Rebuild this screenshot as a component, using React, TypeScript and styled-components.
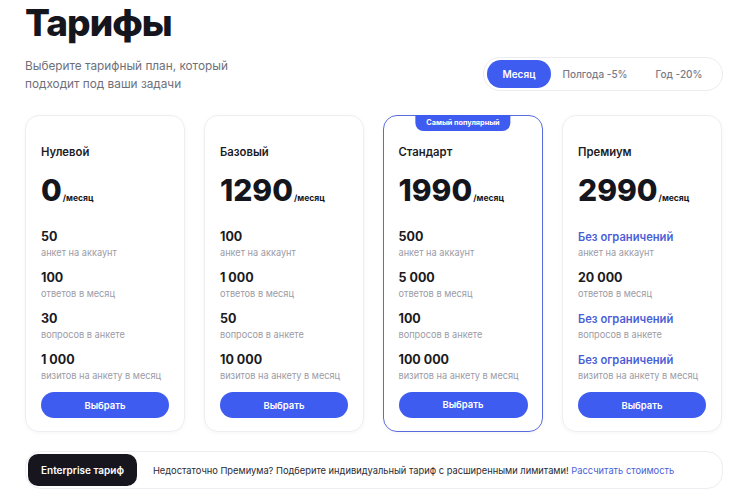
import React, { useState } from 'react';
import styled, { createGlobalStyle, css } from 'styled-components';

type Feature = { value: string; label: string; unlimited?: boolean };
type Plan = { name: string; price: string; features: Feature[]; popular?: boolean };

const PERIODS = [
  { label: 'Месяц', width: 64 },
  { label: 'Полгода -5%', width: 88 },
  { label: 'Год -20%', width: 80 }
];

const PLANS: Plan[] = [
  {
    name: 'Нулевой',
    price: '0',
    features: [
      { value: '50', label: 'анкет на аккаунт' },
      { value: '100', label: 'ответов в месяц' },
      { value: '30', label: 'вопросов в анкете' },
      { value: '1 000', label: 'визитов на анкету в месяц' }
    ]
  },
  {
    name: 'Базовый',
    price: '1290',
    features: [
      { value: '100', label: 'анкет на аккаунт' },
      { value: '1 000', label: 'ответов в месяц' },
      { value: '50', label: 'вопросов в анкете' },
      { value: '10 000', label: 'визитов на анкету в месяц' }
    ]
  },
  {
    name: 'Стандарт',
    price: '1990',
    popular: true,
    features: [
      { value: '500', label: 'анкет на аккаунт' },
      { value: '5 000', label: 'ответов в месяц' },
      { value: '100', label: 'вопросов в анкете' },
      { value: '100 000', label: 'визитов на анкету в месяц' }
    ]
  },
  {
    name: 'Премиум',
    price: '2990',
    features: [
      { value: 'Без ограничений', label: 'анкет на аккаунт', unlimited: true },
      { value: '20 000', label: 'ответов в месяц' },
      { value: 'Без ограничений', label: 'вопросов в анкете', unlimited: true },
      { value: 'Без ограничений', label: 'визитов на анкету в месяц', unlimited: true }
    ]
  }
];

export default function App() {
  const [period, setPeriod] = useState(0);

  return (
    <>
      <GlobalStyle />
      <Page>
        <Header>
          <div>
            <Title>Тарифы</Title>
            <Subtitle>
              Выберите тарифный план, который
              <br />
              подходит под ваши задачи
            </Subtitle>
          </div>
          <Toggle>
            {PERIODS.map((p, idx) => (
              <ToggleItem
                key={p.label}
                $active={idx === period}
                $width={p.width}
                onClick={() => setPeriod(idx)}
              >
                {p.label}
              </ToggleItem>
            ))}
          </Toggle>
        </Header>

        <Cards>
          {PLANS.map((plan) => (
            <Card key={plan.name} $popular={plan.popular}>
              {plan.popular && <Badge>Самый популярный</Badge>}
              <PlanName>{plan.name}</PlanName>
              <Price>
                {plan.price}
                <Per>/месяц</Per>
              </Price>
              <Features>
                {plan.features.map((f, idx) => (
                  <FeatureItem key={idx}>
                    <FeatureValue $unlimited={f.unlimited}>{f.value}</FeatureValue>
                    <FeatureLabel>{f.label}</FeatureLabel>
                  </FeatureItem>
                ))}
              </Features>
              <ChooseButton>Выбрать</ChooseButton>
            </Card>
          ))}
        </Cards>

        <Enterprise>
          <EnterpriseTag>Enterprise тариф</EnterpriseTag>
          <EnterpriseText>
            Недостаточно Премиума? Подберите индивидуальный тариф с расширенными лимитами!{' '}
            <Link href="#">Рассчитать стоимость</Link>
          </EnterpriseText>
        </Enterprise>
      </Page>
    </>
  );
}

const GlobalStyle = createGlobalStyle`
  body {
    margin: 0;
    background: #fff;
    font-family: Inter, "Noto Sans", sans-serif;
    color: #17171f;
  }
`;

const Page = styled.div`
  width: 698px;
  padding: 1px 25px 0;
`;

const Header = styled.header`
  display: flex;
  justify-content: space-between;
  align-items: flex-end;
`;

const Title = styled.h1`
  margin: 0;
  font-size: 37px;
  line-height: 44px;
  font-weight: 800;
  letter-spacing: -1px;
  color: #15151d;
`;

const Subtitle = styled.p`
  margin: 12px 0 0;
  font-size: 11.8px;
  line-height: 18px;
  color: #6f6f7a;
`;

const Toggle = styled.div`
  display: flex;
  align-items: center;
  padding: 2px 3px;
  margin-bottom: 2px;
  border: 1px solid #ececf1;
  border-radius: 17px;
`;

const ToggleItem = styled.button<{ $active?: boolean; $width: number }>`
  height: 28px;
  width: ${(p) => p.$width}px;
  padding: 0;
  border: none;
  border-radius: 14px;
  background: transparent;
  font-family: inherit;
  font-size: 10px;
  font-weight: 500;
  color: #7a7a86;
  cursor: pointer;

  ${(p) => p.$active && css`
    background: #3f5cf0;
    color: #fff;
    font-weight: 600;
  `}
`;

const Cards = styled.div`
  display: grid;
  grid-template-columns: repeat(4, 160px);
  gap: 19px;
  margin-top: 22px;
`;

const Card = styled.div<{ $popular?: boolean }>`
  position: relative;
  display: flex;
  flex-direction: column;
  padding: 28px 15px 13px;
  border: 1px solid #ededf2;
  border-radius: 14px;
  box-shadow: 0 1px 4px rgba(20, 20, 40, 0.04);

  ${(p) => p.$popular && css`
    border: 1.5px solid #5a6cdc;
    padding: 27.5px 14.5px 12.5px;
  `}
`;

const Badge = styled.div`
  position: absolute;
  top: -1.5px;
  left: 50%;
  transform: translateX(-50%);
  height: 16px;
  padding: 0 11px;
  display: flex;
  align-items: center;
  background: #3f5cf0;
  color: #fff;
  font-size: 7.3px;
  font-weight: 700;
  white-space: nowrap;
  border-radius: 0 0 8px 8px;
`;

const PlanName = styled.div`
  font-size: 11.3px;
  line-height: 16px;
  font-weight: 600;
  color: #1c1c24;
`;

const Price = styled.div`
  margin-top: 12px;
  font-size: 30px;
  line-height: 36px;
  font-weight: 800;
  color: #15151d;
`;

const Per = styled.span`
  font-size: 8.5px;
  font-weight: 700;
  margin-left: 1px;
`;

const Features = styled.div`
  display: flex;
  flex-direction: column;
  gap: 10px;
  margin-top: 13px;
`;

const FeatureItem = styled.div`
  display: flex;
  flex-direction: column;
`;

const FeatureValue = styled.div<{ $unlimited?: boolean }>`
  font-size: 12.5px;
  line-height: 16px;
  font-weight: 700;
  color: #1a1a22;

  ${(p) => p.$unlimited && css`
    font-size: 11.2px;
    font-weight: 600;
    color: #4a5fd6;
  `}
`;

const FeatureLabel = styled.div`
  font-size: 9.2px;
  line-height: 15px;
  color: #9b9ba6;
`;

const ChooseButton = styled.button`
  margin-top: 9px;
  height: 26px;
  width: 100%;
  border: none;
  border-radius: 13px;
  background: #3f5cf0;
  color: #fff;
  font-family: inherit;
  font-size: 9.5px;
  font-weight: 600;
  cursor: pointer;
`;

const Enterprise = styled.div`
  display: flex;
  align-items: center;
  gap: 16px;
  margin-top: 19px;
  padding: 2px;
  border: 1px solid #ededf2;
  border-radius: 16px;
`;

const EnterpriseTag = styled.div`
  height: 32px;
  padding: 0 13px;
  display: flex;
  align-items: center;
  background: #17161f;
  color: #fff;
  font-size: 10px;
  font-weight: 600;
  border-radius: 10px;
`;

const EnterpriseText = styled.div`
  font-size: 9.3px;
  color: #2a2a33;
`;

const Link = styled.a`
  color: #4a5fd6;
  text-decoration: none;
`;
